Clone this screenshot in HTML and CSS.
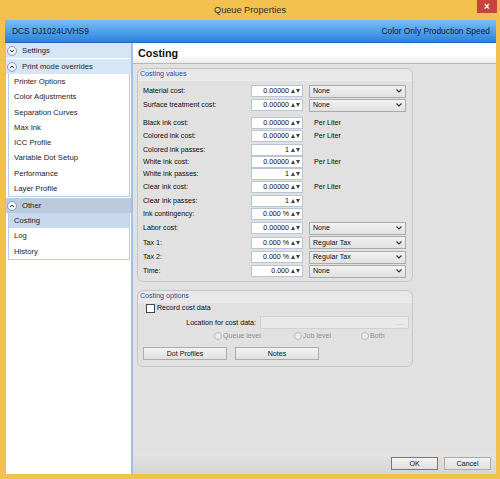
FILE: index.html
```html
<!DOCTYPE html>
<html lang="en">

<head>
    <meta charset="UTF-8">
    <title>Queue Properties</title>
    <link rel="stylesheet" href="styles.css">
</head>

<body>
    <div class="window">
        <div class="titlebar">
            <span class="title">Queue Properties</span>
            <button class="close-btn">×</button>
        </div>

        <div class="frame">
            <div class="banner">
                <span>DCS DJ1024UVHS9</span>
                <span>Color Only Production Speed</span>
            </div>

            <div class="body">
                <aside class="sidebar">
                    <div class="nav-header settings">
                        <svg class="chev" viewBox="0 0 10 10"><circle cx="5" cy="5" r="4.5"/><path d="M3 4 L5 6 L7 4"/></svg>
                        Settings
                    </div>
                    <div class="nav-header">
                        <svg class="chev" viewBox="0 0 10 10"><circle cx="5" cy="5" r="4.5"/><path d="M3 6 L5 4 L7 6"/></svg>
                        Print mode overrides
                    </div>
                    <div class="nav-list">
                        <div class="nav-item">Printer Options</div>
                        <div class="nav-item">Color Adjustments</div>
                        <div class="nav-item">Separation Curves</div>
                        <div class="nav-item">Max Ink</div>
                        <div class="nav-item">ICC Profile</div>
                        <div class="nav-item">Variable Dot Setup</div>
                        <div class="nav-item">Performance</div>
                        <div class="nav-item">Layer Profile</div>
                    </div>
                    <div class="nav-header other">
                        <svg class="chev" viewBox="0 0 10 10"><circle cx="5" cy="5" r="4.5"/><path d="M3 6 L5 4 L7 6"/></svg>
                        Other
                    </div>
                    <div class="nav-list">
                        <div class="nav-item active">Costing</div>
                        <div class="nav-item">Log</div>
                        <div class="nav-item">History</div>
                    </div>
                </aside>

                <main class="main">
                    <div class="page-head">Costing</div>

                    <div class="content">
                        <div class="group">
                            <div class="group-title">Costing values</div>
                            <div class="group-body values">
                                <div class="row">
                                    <label>Material cost:</label>
                                    <div class="spin"><span class="val">0.00000</span><svg class="arrows" viewBox="0 0 9 4"><path d="M0 4 L2 0 L4 4 Z M5 0 L9 0 L7 4 Z"/></svg></div>
                                    <div class="select"><span>None</span><svg class="drop" viewBox="0 0 6 4"><path d="M0.5 0.5 L3 3 L5.5 0.5"/></svg></div>
                                </div>
                                <div class="row spaced">
                                    <label>Surface treatment cost:</label>
                                    <div class="spin"><span class="val">0.00000</span><svg class="arrows" viewBox="0 0 9 4"><path d="M0 4 L2 0 L4 4 Z M5 0 L9 0 L7 4 Z"/></svg></div>
                                    <div class="select"><span>None</span><svg class="drop" viewBox="0 0 6 4"><path d="M0.5 0.5 L3 3 L5.5 0.5"/></svg></div>
                                </div>
                                <div class="row tight">
                                    <label>Black ink cost:</label>
                                    <div class="spin"><span class="val">0.00000</span><svg class="arrows" viewBox="0 0 9 4"><path d="M0 4 L2 0 L4 4 Z M5 0 L9 0 L7 4 Z"/></svg></div>
                                    <span class="unit">Per Liter</span>
                                </div>
                                <div class="row">
                                    <label>Colored ink cost:</label>
                                    <div class="spin"><span class="val">0.00000</span><svg class="arrows" viewBox="0 0 9 4"><path d="M0 4 L2 0 L4 4 Z M5 0 L9 0 L7 4 Z"/></svg></div>
                                    <span class="unit">Per Liter</span>
                                </div>
                                <div class="row tight">
                                    <label>Colored ink passes:</label>
                                    <div class="spin"><span class="val">1</span><svg class="arrows" viewBox="0 0 9 4"><path d="M0 4 L2 0 L4 4 Z M5 0 L9 0 L7 4 Z"/></svg></div>
                                </div>
                                <div class="row tighter">
                                    <label>White ink cost:</label>
                                    <div class="spin"><span class="val">0.00000</span><svg class="arrows" viewBox="0 0 9 4"><path d="M0 4 L2 0 L4 4 Z M5 0 L9 0 L7 4 Z"/></svg></div>
                                    <span class="unit">Per Liter</span>
                                </div>
                                <div class="row tighter">
                                    <label>White ink passes:</label>
                                    <div class="spin"><span class="val">1</span><svg class="arrows" viewBox="0 0 9 4"><path d="M0 4 L2 0 L4 4 Z M5 0 L9 0 L7 4 Z"/></svg></div>
                                </div>
                                <div class="row">
                                    <label>Clear ink cost:</label>
                                    <div class="spin"><span class="val">0.00000</span><svg class="arrows" viewBox="0 0 9 4"><path d="M0 4 L2 0 L4 4 Z M5 0 L9 0 L7 4 Z"/></svg></div>
                                    <span class="unit">Per Liter</span>
                                </div>
                                <div class="row tight">
                                    <label>Clear ink passes:</label>
                                    <div class="spin"><span class="val">1</span><svg class="arrows" viewBox="0 0 9 4"><path d="M0 4 L2 0 L4 4 Z M5 0 L9 0 L7 4 Z"/></svg></div>
                                </div>
                                <div class="row">
                                    <label>Ink contingency:</label>
                                    <div class="spin"><span class="val">0.000 %</span><svg class="arrows" viewBox="0 0 9 4"><path d="M0 4 L2 0 L4 4 Z M5 0 L9 0 L7 4 Z"/></svg></div>
                                </div>
                                <div class="row">
                                    <label>Labor cost:</label>
                                    <div class="spin"><span class="val">0.00000</span><svg class="arrows" viewBox="0 0 9 4"><path d="M0 4 L2 0 L4 4 Z M5 0 L9 0 L7 4 Z"/></svg></div>
                                    <div class="select"><span>None</span><svg class="drop" viewBox="0 0 6 4"><path d="M0.5 0.5 L3 3 L5.5 0.5"/></svg></div>
                                </div>
                                <div class="row loose">
                                    <label>Tax 1:</label>
                                    <div class="spin"><span class="val">0.000 %</span><svg class="arrows" viewBox="0 0 9 4"><path d="M0 4 L2 0 L4 4 Z M5 0 L9 0 L7 4 Z"/></svg></div>
                                    <div class="select"><span>Regular Tax</span><svg class="drop" viewBox="0 0 6 4"><path d="M0.5 0.5 L3 3 L5.5 0.5"/></svg></div>
                                </div>
                                <div class="row">
                                    <label>Tax 2:</label>
                                    <div class="spin"><span class="val">0.000 %</span><svg class="arrows" viewBox="0 0 9 4"><path d="M0 4 L2 0 L4 4 Z M5 0 L9 0 L7 4 Z"/></svg></div>
                                    <div class="select"><span>Regular Tax</span><svg class="drop" viewBox="0 0 6 4"><path d="M0.5 0.5 L3 3 L5.5 0.5"/></svg></div>
                                </div>
                                <div class="row">
                                    <label>Time:</label>
                                    <div class="spin"><span class="val">0.000</span><svg class="arrows" viewBox="0 0 9 4"><path d="M0 4 L2 0 L4 4 Z M5 0 L9 0 L7 4 Z"/></svg></div>
                                    <div class="select"><span>None</span><svg class="drop" viewBox="0 0 6 4"><path d="M0.5 0.5 L3 3 L5.5 0.5"/></svg></div>
                                </div>
                            </div>
                        </div>

                        <div class="group options">
                            <div class="group-title">Costing options</div>
                            <div class="group-body">
                                <div class="check-row">
                                    <span class="checkbox"></span>
                                    <span>Record cost data</span>
                                </div>
                                <div class="location-row">
                                    <label>Location for cost data:</label>
                                    <div class="path-field"><span>...</span></div>
                                </div>
                                <div class="radio-row">
                                    <span class="radio"><span class="dot"></span>Queue level</span>
                                    <span class="radio"><span class="dot"></span>Job level</span>
                                    <span class="radio"><span class="dot"></span>Both</span>
                                </div>
                                <div class="button-row">
                                    <button class="btn wide">Dot Profiles</button>
                                    <button class="btn wide">Notes</button>
                                </div>
                            </div>
                        </div>
                    </div>

                    <div class="footer">
                        <button class="btn default">OK</button>
                        <button class="btn">Cancel</button>
                    </div>
                </main>
            </div>
        </div>
    </div>
</body>

</html>
```

FILE: styles.css
```css
:root {
    --frame-yellow: #f2c14f;
    --panel-grey: #e1e1e1;
    --nav-blue: #d7e6f6;
    --nav-border: #b6cde8;
    --label-color: #0a0a0a;
}

* {
    box-sizing: border-box;
    margin: 0;
    padding: 0;
}

body {
    width: 500px;
    height: 479px;
    overflow: hidden;
    font-family: "Liberation Sans", Arial, sans-serif;
    font-size: 7.1px;
    color: var(--label-color);
    background: var(--frame-yellow);
}

.window {
    display: flex;
    flex-direction: column;
    height: 479px;
}

/* Title bar */
.titlebar {
    height: 20px;
    display: grid;
    grid-template-columns: 1fr auto 1fr;
    align-items: start;
}

.titlebar .title {
    grid-column: 2;
    font-size: 9.2px;
    line-height: 20px;
    color: #2e2e2e;
}

.close-btn {
    grid-column: 3;
    justify-self: end;
    width: 20px;
    height: 13px;
    margin-right: 3px;
    border: none;
    background: #c8433b;
    color: #fff;
    font-family: "Liberation Sans", Arial, sans-serif;
    font-size: 10px;
    font-weight: bold;
    line-height: 13px;
}

.frame {
    flex: 1;
    display: flex;
    flex-direction: column;
    margin: 0 4px 5px 5px;
    background: var(--panel-grey);
    min-height: 0;
}

.banner {
    height: 23px;
    display: flex;
    justify-content: space-between;
    align-items: center;
    padding: 0 6px 0 7px;
    background: linear-gradient(#7bbdf3, #52a1ea 50%, #2b81dd);
    border-bottom: 1px solid #1d67bd;
    font-size: 8.4px;
    color: #0b1a30;
}

.body {
    flex: 1;
    display: flex;
    min-height: 0;
}

/* Sidebar */
.sidebar {
    width: 128px;
    background: #fff;
    border-left: 1px solid #a9c4e4;
    border-right: 2px solid #a3bfe2;
    font-size: 7.7px;
}

.nav-header {
    height: 15px;
    display: flex;
    align-items: center;
    gap: 5px;
    padding-left: 1px;
    background: var(--nav-blue);
    color: #1c1c1c;
}

.nav-header.settings {
    margin-bottom: 1px;
}

.nav-header.other {
    margin-top: 1px;
    background: #bccbdb;
}

.chev {
    width: 10px;
    height: 10px;
    fill: #eef3f9;
    stroke: #8295aa;
    stroke-width: 0.9;
}

.chev path {
    fill: none;
    stroke: #2a2a2a;
    stroke-width: 1;
}

.nav-list {
    margin: 0 1px 0 2px;
    border: 1px solid var(--nav-border);
    border-top: none;
}

.nav-item {
    height: 15.25px;
    display: flex;
    align-items: center;
    padding-left: 5px;
    color: #1c1c1c;
}

.nav-item.active {
    background: #c7d8ef;
}

/* Main area */
.main {
    flex: 1;
    display: flex;
    flex-direction: column;
}

.page-head {
    height: 21px;
    display: flex;
    align-items: center;
    padding-left: 5px;
    background: linear-gradient(#fff, #fff 60%, #ebebeb);
    border-bottom: 1px solid #b8b8b8;
    font-size: 10.8px;
    font-weight: bold;
    color: #111;
}

.content {
    flex: 1;
    padding: 4px 0 0 4px;
}

.group {
    width: 276px;
    border: 1px solid #c6c6c6;
    border-radius: 6px;
}

.group.options {
    margin-top: 8px;
}

.group-title {
    height: 12px;
    padding-left: 2px;
    line-height: 11px;
    color: #1f4f97;
    background: #e8e8e8;
    border-bottom: 1px solid #ededed;
    border-radius: 6px 6px 0 0;
}

.values {
    padding: 3px 5px 3px 5px;
}

.row {
    height: 14px;
    display: flex;
    align-items: center;
}

.row.tight {
    height: 13px;
}

.row.tighter {
    height: 12px;
}

.row.loose {
    height: 15px;
}

.row.spaced {
    margin-bottom: 4px;
}

.row label {
    width: 108px;
}

.spin {
    width: 52px;
    height: 12px;
    display: flex;
    align-items: center;
    background: #fff;
    border: 1px solid #b7c5d6;
}

.spin .val {
    flex: 1;
    text-align: right;
    padding-right: 2px;
}

.arrows {
    width: 9px;
    height: 4px;
    margin-right: 2px;
    fill: #444;
}

.select {
    width: 97px;
    height: 13px;
    margin-left: 6px;
    display: flex;
    align-items: center;
    justify-content: space-between;
    padding: 0 3px;
    background: linear-gradient(#f2f2f2, #e1e1e1);
    border: 1px solid #ababab;
}

.drop {
    width: 6px;
    height: 4px;
    fill: none;
    stroke: #333;
    stroke-width: 1.1;
}

.unit {
    margin-left: 11px;
}

/* Costing options */
.options .group-body {
    padding: 0 0 6px 0;
}

.check-row {
    height: 10px;
    display: flex;
    align-items: center;
    gap: 2px;
    padding-left: 8px;
}

.checkbox {
    width: 9px;
    height: 9px;
    background: #fff;
    border: 1px solid #444;
}

.location-row {
    height: 13px;
    margin-top: 3px;
    display: flex;
    align-items: center;
    gap: 4px;
}

.location-row label {
    width: 118px;
    text-align: right;
}

.path-field {
    width: 149px;
    height: 13px;
    display: flex;
    align-items: center;
    justify-content: flex-end;
    padding-right: 5px;
    background: #e9e9e9;
    border: 1px solid #d0d0d0;
    color: #999;
}

.radio-row {
    height: 12px;
    margin-top: 1px;
    display: grid;
    grid-template-columns: 80px 67px auto;
    align-items: center;
    padding-left: 76px;
    color: #8c8c8c;
}

.radio {
    display: flex;
    align-items: center;
    gap: 1px;
}

.dot {
    width: 8px;
    height: 8px;
    border-radius: 50%;
    background: #ececec;
    border: 1px solid #b8b8b8;
}

.button-row {
    display: flex;
    gap: 8px;
    margin-top: 5px;
    padding-left: 5px;
}

.btn {
    width: 47px;
    height: 13px;
    background: linear-gradient(#f3f3f3, #e0e0e0);
    border: 1px solid #acacac;
    font-family: "Liberation Sans", Arial, sans-serif;
    font-size: 7.1px;
    color: #111;
}

.btn.wide {
    width: 84px;
}

.btn.default {
    border-color: #3d86c8;
}

.footer {
    height: 21px;
    display: flex;
    justify-content: flex-end;
    align-items: center;
    gap: 6px;
    padding-right: 5px;
    background: linear-gradient(#e3e3e3, #d5d5d5);
}
```
